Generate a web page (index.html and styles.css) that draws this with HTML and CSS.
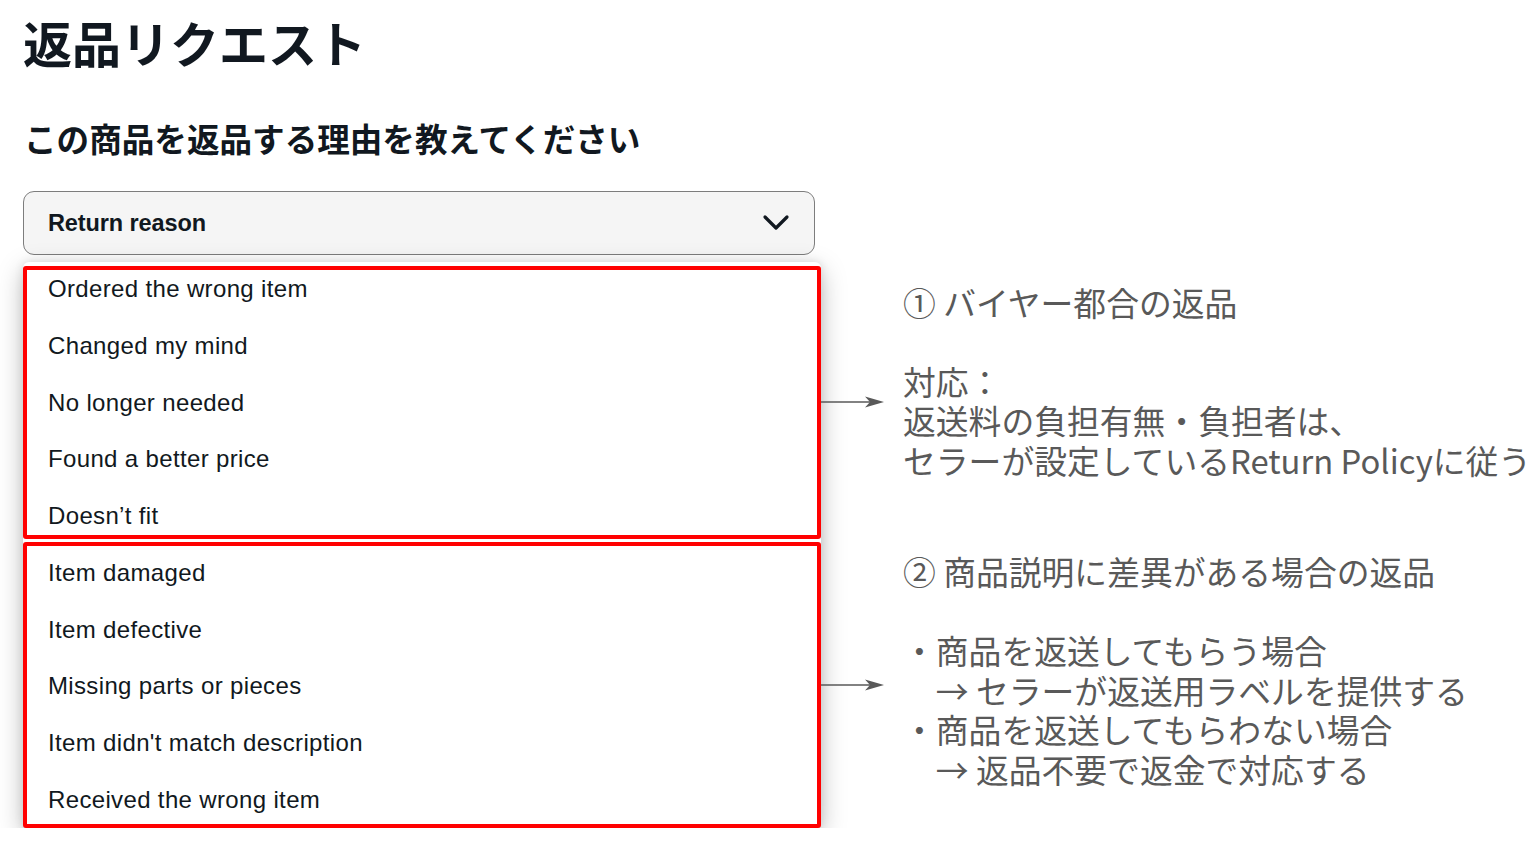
FILE: index.html
```html
<!DOCTYPE html>
<html lang="ja">
<head>
<meta charset="utf-8">
<title>返品リクエスト</title>
<link rel="stylesheet" href="styles.css">
</head>
<body>
<main class="page">
  <h1 class="title">返品リクエスト</h1>
  <h2 class="subtitle">この商品を返品する理由を教えてください</h2>
  <div class="select">
    <span class="select-label">Return reason</span>
    <svg class="chevron" width="28" height="18" viewBox="0 0 28 18" aria-hidden="true">
      <polyline points="3,3 14,14 25,3" fill="none" stroke="#111820" stroke-width="3.2" stroke-linecap="round" stroke-linejoin="round"/>
    </svg>
  </div>
  <div class="options">
    <div class="menu-bg"></div>
    <div class="box box-buyer">
      <ul class="items items-buyer">
        <li>Ordered the wrong item</li>
        <li>Changed my mind</li>
        <li>No longer needed</li>
        <li>Found a better price</li>
        <li>Doesn’t fit</li>
      </ul>
    </div>
    <svg class="arrow arrow-1" width="66" height="14" viewBox="0 0 66 14" aria-hidden="true">
      <line x1="0" y1="7" x2="58" y2="7" stroke="#595959" stroke-width="1.6"/>
      <path d="M64,7 L45,1.5 L50,7 L45,12.5 Z" fill="#595959"/>
    </svg>
    <div class="note note-1">
      <p class="note-head">① バイヤー都合の返品</p>
      <p>対応：</p>
      <p>返送料の負担有無・負担者は、</p>
      <p>セラーが設定しているReturn Policyに従う</p>
    </div>
    <div class="box box-seller">
      <ul class="items items-seller">
        <li>Item damaged</li>
        <li>Item defective</li>
        <li>Missing parts or pieces</li>
        <li>Item didn't match description</li>
        <li>Received the wrong item</li>
      </ul>
    </div>
    <svg class="arrow arrow-2" width="66" height="14" viewBox="0 0 66 14" aria-hidden="true">
      <line x1="0" y1="7" x2="58" y2="7" stroke="#595959" stroke-width="1.6"/>
      <path d="M64,7 L45,1.5 L50,7 L45,12.5 Z" fill="#595959"/>
    </svg>
    <div class="note note-2">
      <p class="note-head">② 商品説明に差異がある場合の返品</p>
      <p>・商品を返送してもらう場合</p>
      <p>　→ セラーが返送用ラベルを提供する</p>
      <p>・商品を返送してもらわない場合</p>
      <p>　→ 返品不要で返金で対応する</p>
    </div>
  </div>
</main>
</body>
</html>
```

FILE: styles.css
```css
* { box-sizing: border-box; }

html, body {
  margin: 0;
  padding: 0;
  background: #ffffff;
}

body {
  font-family: "Liberation Sans", Arial, sans-serif;
  color: #111820;
}

.page {
  padding: 17px 0 0 23px;
}

.title {
  margin: 0;
  font-family: "Noto Sans CJK JP", sans-serif;
  font-weight: 700;
  font-size: 49px;
  line-height: 49px;
  color: #111820;
  white-space: nowrap;
}

.subtitle {
  margin: 55px 0 0 1px;
  font-family: "Noto Sans CJK JP", sans-serif;
  font-weight: 700;
  font-size: 32.6px;
  line-height: 33px;
  color: #111820;
  white-space: nowrap;
}

.select {
  margin-top: 37px;
  width: 792px;
  height: 64px;
  display: flex;
  align-items: center;
  justify-content: space-between;
  padding: 0 24px 0 24px;
  background: #f5f5f5;
  border: 1px solid #7d7d7d;
  border-radius: 11px;
}

.select-label {
  font-weight: 700;
  font-size: 23.5px;
  letter-spacing: -0.1px;
  color: #111820;
}

.chevron {
  display: block;
}

.options {
  margin-top: 11px;
  display: grid;
  grid-template-columns: 798px 66px 1fr;
  grid-template-rows: auto auto;
  row-gap: 3px;
}

.menu-bg {
  grid-column: 1;
  grid-row: 1 / 3;
  margin-top: -4px;
  background: #ffffff;
  border-radius: 6px;
  box-shadow: 0 8px 26px rgba(0, 0, 0, 0.26), 0 0 10px rgba(0, 0, 0, 0.1);
}

.box {
  grid-column: 1;
  position: relative;
  border: 4px solid #ff0000;
  border-radius: 3px;
  padding: 0 0 0 21px;
}

.box-buyer { grid-row: 1; }
.box-seller { grid-row: 2; }

.items {
  list-style: none;
  padding: 0;
  font-size: 24px;
  line-height: 56.75px;
  color: #111820;
  letter-spacing: 0.35px;
}

.items li {
  white-space: nowrap;
}

.items-buyer { margin: -9px 0 -10px; }
.items-seller { margin: -1px 0 -5px; }

.arrow {
  grid-column: 2;
  align-self: center;
  display: block;
  margin-left: -1px;
}

.arrow-1 { grid-row: 1; }
.arrow-2 { grid-row: 2; }

.note {
  grid-column: 3;
  padding-left: 16px;
  font-family: "Noto Sans CJK JP", sans-serif;
  font-weight: 400;
  font-size: 32.8px;
  line-height: 39.5px;
  color: #595959;
  white-space: nowrap;
}

.note p {
  margin: 0;
}

.note-1 { grid-row: 1; padding-top: 15.5px; }
.note-2 { grid-row: 2; padding-top: 9.5px; }

.note-head {
  margin-bottom: 39.5px !important;
}
```
